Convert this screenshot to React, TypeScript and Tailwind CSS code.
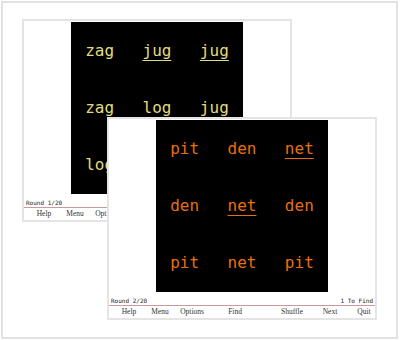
const mono = "font-['DejaVu_Sans_Mono',monospace]";

type Word = { text: string; marked?: boolean };

const MENU = [
  { label: 'Help', gap: 'ml-[20px]' },
  { label: 'Menu', gap: 'ml-[31px]' },
  { label: 'Options', gap: 'ml-[32px]' },
  { label: 'Find', gap: 'ml-[43px]' },
  { label: 'Shuffle', gap: 'ml-[57px]' },
  { label: 'Next', gap: 'ml-[38px]' },
  { label: 'Quit', gap: 'ml-[34px]' },
];

function GameWindow({
  words,
  color,
  round,
  toFind,
  className,
}: {
  words: Word[];
  color: string;
  round: string;
  toFind?: string;
  className: string;
}) {
  return (
    <div className={`absolute flex h-[203px] w-[270px] flex-col border-2 border-[#e4e4e4] bg-white ${className}`}>
      <div className="mx-auto mt-px grid h-[172px] w-[172px] grid-cols-3 grid-rows-3 place-items-center bg-black">
        {words.map((w, i) => (
          <span
            key={i}
            className={`${mono} text-[16px] leading-none ${color} ${
              w.marked ? 'underline decoration-1 underline-offset-[4px]' : ''
            }`}
          >
            {w.text}
          </span>
        ))}
      </div>
      <div className={`${mono} flex h-[13px] items-end justify-between px-[2px] pb-[1px] text-[6px] leading-none text-[#222]`}>
        <span>{round}</span>
        {toFind && <span>{toFind}</span>}
      </div>
      <div className="h-px bg-[#c99a9a]" />
      <div className="flex h-[11px] items-center font-['Liberation_Serif',serif] text-[7.5px] leading-none text-[#333]">
        {MENU.map((m) => (
          <div key={m.label} className={`flex w-0 justify-center ${m.gap}`}>
            <span className="whitespace-nowrap">{m.label}</span>
          </div>
        ))}
      </div>
    </div>
  );
}

const backWords: Word[] = [
  { text: 'zag' },
  { text: 'jug', marked: true },
  { text: 'jug', marked: true },
  { text: 'zag' },
  { text: 'log' },
  { text: 'jug' },
  { text: 'log' },
  { text: 'zag' },
  { text: 'jug' },
];

const frontWords: Word[] = [
  { text: 'pit' },
  { text: 'den' },
  { text: 'net', marked: true },
  { text: 'den' },
  { text: 'net', marked: true },
  { text: 'den' },
  { text: 'pit' },
  { text: 'net' },
  { text: 'pit' },
];

export default function App() {
  return (
    <div className="h-[340px] w-[400px] bg-white p-px">
      <div className="relative h-[338px] w-[397px] border-2 border-[#e2e2e2] bg-white">
        <GameWindow
          words={backWords}
          color="text-[#e0dc80]"
          round="Round 1/20"
          className="left-[19px] top-[16px]"
        />
        <GameWindow
          words={frontWords}
          color="text-[#e8700c]"
          round="Round 2/20"
          toFind="1 To Find"
          className="left-[104px] top-[114px]"
        />
      </div>
    </div>
  );
}
